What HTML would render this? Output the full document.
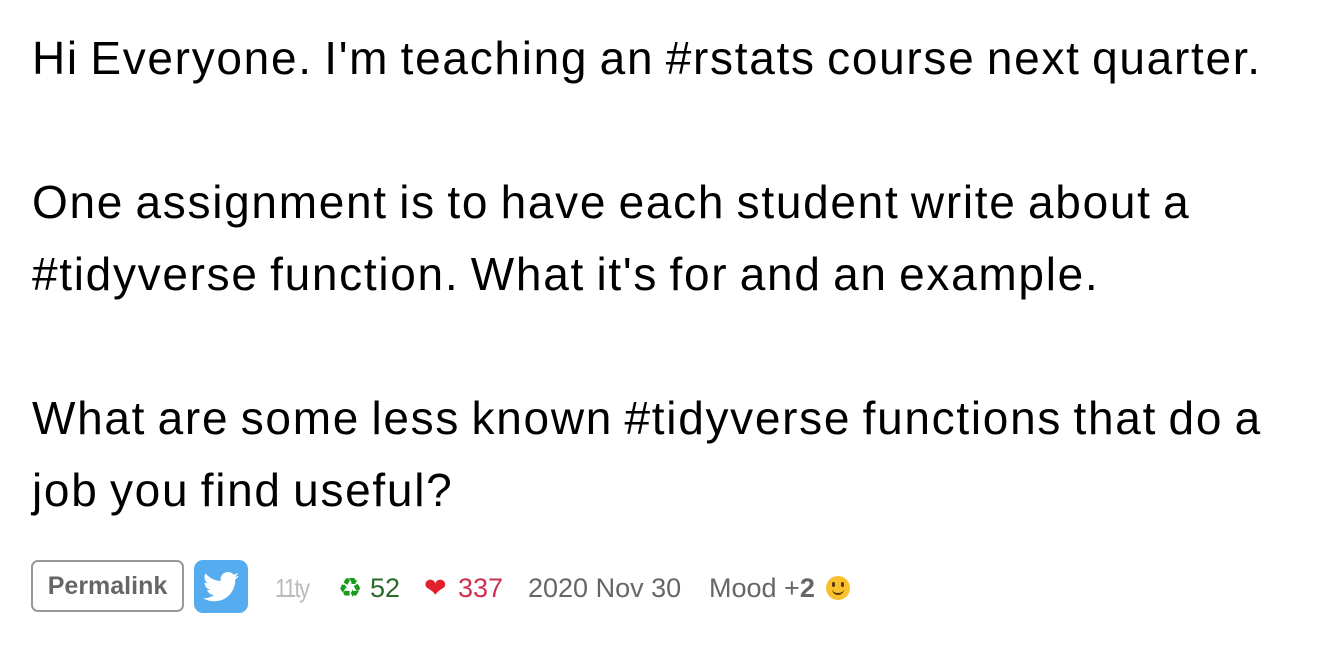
<!DOCTYPE html>
<html><head><meta charset="utf-8"><style>
body{margin:0;background:#fff;font-family:"Liberation Sans",sans-serif;color:#000;width:1344px;height:650px;overflow:hidden;position:relative}
.t{position:absolute;left:32px;top:22px;font-size:46px;line-height:72px;letter-spacing:1.7px;word-spacing:-3px;white-space:nowrap}
.t p{margin:0 0 72px 0}
.a{position:absolute;font-size:27px;color:#666;white-space:nowrap;top:571px;line-height:34px}
.pl{position:absolute;left:31px;top:560px;box-sizing:border-box;width:153px;height:52px;border:2px solid #999;border-radius:7px;display:flex;align-items:center;justify-content:center;font-weight:bold;color:#666;font-size:25px}
.tw{position:absolute;left:194px;top:560px;width:54px;height:53px;background:#55acee;border-radius:9px;display:flex;align-items:center;justify-content:center}
</style></head><body>
<div class="t">
<p>Hi Everyone. I'm teaching an #rstats course next quarter.</p>
<p>One assignment is to have each student write about a<br>#tidyverse function. What it's for and an example.</p>
<p>What are some less known #tidyverse functions that do a<br>job you find useful?</p>
</div>
<div class="pl">Permalink</div>
<div class="tw"><svg width="36" height="30" viewBox="0 0 24 20"><path fill="#fff" d="M24 2.4c-.9.4-1.8.7-2.8.8 1-.6 1.8-1.6 2.2-2.7-1 .6-2 1-3.1 1.2C19.4.7 18.1 0 16.6 0c-2.7 0-4.9 2.2-4.9 4.9 0 .4 0 .8.1 1.1C7.7 5.800 4.1 3.9 1.7.9c-.4.7-.7 1.6-.7 2.5 0 1.7.9 3.2 2.2 4.1-.8 0-1.6-.2-2.2-.6v.1c0 2.4 1.7 4.4 3.9 4.8-.4.1-.8.2-1.3.2-.3 0-.6 0-.9-.1.6 2 2.4 3.4 4.6 3.4-1.7 1.3-3.8 2.1-6.1 2.1-.4 0-.8 0-1.2-.1 2.2 1.4 4.8 2.2 7.5 2.2 9.1 0 14-7.5 14-14v-.6c1-.7 1.8-1.6 2.5-2.5z"/></svg></div>
<span class="a" style="left:275px;color:#bbb;font-size:26px;letter-spacing:-2px;transform:scaleX(.85);transform-origin:left">11ty</span>
<span class="a" style="left:338px;color:#1a9a1a">♻</span><span class="a" style="left:370px;color:#2a6a2a">52</span>
<span class="a" style="left:424px;color:#e0202a">❤</span><span class="a" style="left:458px;color:#d03050">337</span>
<span class="a" style="left:528px">2020 Nov 30</span>
<span class="a" style="left:709px">Mood +<b>2</b></span>
<span style="position:absolute;left:826px;top:576px;width:24px;height:24px;border-radius:50%;background:#f8c12c"><span style="position:absolute;left:6px;top:6px;width:3px;height:5px;background:#5a3a10;border-radius:2px"></span><span style="position:absolute;left:15px;top:6px;width:3px;height:5px;background:#5a3a10;border-radius:2px"></span><span style="position:absolute;left:6px;top:11px;width:12px;height:6px;border-bottom:2px solid #5a3a10;border-radius:0 0 8px 8px"></span></span>
</body></html>
